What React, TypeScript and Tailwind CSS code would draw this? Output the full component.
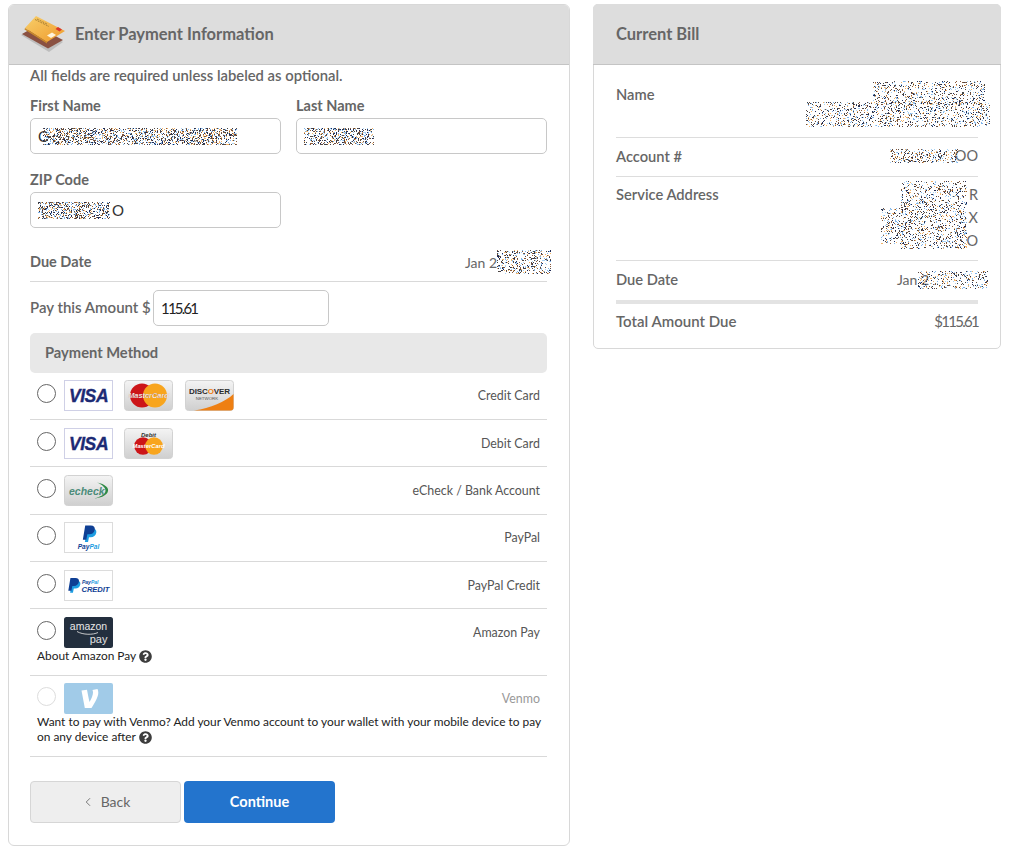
import React from "react";
import { FaQuestionCircle } from "react-icons/fa";
import { ChevronLeft } from "lucide-react";

const NOISE = ["#1f2a55", "#5a4a44", "#7fb4ea", "#f3b469", "#444444", "#a9d3f5", "#8a5a3a"];

function noisePaths(w: number, h: number, seed: number, density: number) {
  let s = seed >>> 0;
  const rnd = () => {
    s = (s * 1664525 + 1013904223) >>> 0;
    return s / 4294967296;
  };
  const paths: string[] = NOISE.map(() => "");
  for (let y = 0; y < h; y++) {
    for (let x = 0; x < w; x++) {
      const r = rnd();
      const c = rnd();
      if (r < density) paths[Math.floor(c * NOISE.length)] += `M${x} ${y}h1v1h-1z`;
    }
  }
  return paths;
}

function Noise({ w, h, seed, density = 0.3, className = "" }: { w: number; h: number; seed: number; density?: number; className?: string }) {
  const paths = React.useMemo(() => noisePaths(w, h, seed, density), [w, h, seed, density]);
  return (
    <svg width={w} height={h} viewBox={`0 0 ${w} ${h}`} shapeRendering="crispEdges" className={className}>
      {paths.map((d, i) => (
        <path key={i} d={d} fill={NOISE[i]} />
      ))}
    </svg>
  );
}

function Grads() {
  return (
    <svg width="0" height="0" className="absolute">
      <defs>
        <linearGradient id="gr" x1="0" y1="0" x2="0" y2="1">
          <stop offset="0" stopColor="#f4f4f4" />
          <stop offset="1" stopColor="#cfcfcf" />
        </linearGradient>
        <linearGradient id="card" x1="0" y1="0" x2="1" y2="1">
          <stop offset="0" stopColor="#f8cf6a" />
          <stop offset="1" stopColor="#ee9a2c" />
        </linearGradient>
      </defs>
    </svg>
  );
}

const Shell = ({ children }: { children: React.ReactNode }) => (
  <svg width="49" height="31" viewBox="0 0 49 31" className="shrink-0 block">
    {children}
  </svg>
);

const Visa = () => (
  <Shell>
    <rect x=".5" y=".5" width="48" height="30" fill="#fff" stroke="#cfd0e6" />
    <text x="24.5" y="21.5" textAnchor="middle" fontFamily="Liberation Sans" fontWeight="700" fontStyle="italic" fontSize="17.5" fill="#1c2a74" stroke="#1c2a74" strokeWidth=".35" letterSpacing="-.4">VISA</text>
  </Shell>
);

const GrayBox = () => <rect x=".5" y=".5" width="48" height="30" rx="3" fill="url(#gr)" stroke="#d2d2d2" />;

const Master = () => (
  <Shell>
    <GrayBox />
    <circle cx="18" cy="15.5" r="12" fill="#cc1518" />
    <circle cx="31" cy="15.5" r="12" fill="#f8a51d" />
    <text x="24.5" y="18" textAnchor="middle" fontFamily="Liberation Sans" fontWeight="700" fontStyle="italic" fontSize="7.4" fill="#fff" stroke="#8a3a20" strokeWidth=".15">MasterCard</text>
  </Shell>
);

const Discover = () => (
  <Shell>
    <GrayBox />
    <path d="M9 30.5C26 28 40 22 48.5 14V27.5a3 3 0 0 1-3 3z" fill="#ee7f12" />
    <text x="24.5" y="14" textAnchor="middle" fontFamily="Liberation Sans" fontWeight="700" fontSize="8" fill="#2b2b2b" textLength="41">DISC<tspan fill="#ee7f12">O</tspan>VER</text>
    <text x="22" y="19.5" textAnchor="middle" fontFamily="Liberation Sans" fontSize="4.4" fill="#555">NETWORK</text>
  </Shell>
);

const Debit = () => (
  <Shell>
    <GrayBox />
    <text x="24.5" y="8.5" textAnchor="middle" fontFamily="Liberation Sans" fontWeight="700" fontStyle="italic" fontSize="6" fill="#333">Debit</text>
    <circle cx="19" cy="18" r="8.8" fill="#cc1518" />
    <circle cx="30" cy="18" r="8.8" fill="#f8a51d" />
    <text x="24.5" y="20" textAnchor="middle" fontFamily="Liberation Sans" fontWeight="700" fontStyle="italic" fontSize="5.8" fill="#fff">MasterCard</text>
  </Shell>
);

const Echeck = () => (
  <Shell>
    <GrayBox />
    <path d="M33 7.5C41 9 46 13 43.5 17.5C41.5 21 36 23 30 23.5C36 22 41.5 19.5 41.5 15.5C41.5 12.5 38 9.5 33 7.5z" fill="#2f8a45" />
    <text x="5" y="19.5" fontFamily="Liberation Sans" fontWeight="700" fontStyle="italic" fontSize="10.5" fill="#4c8c7a">echeck</text>
  </Shell>
);

const PP = ({ x, y, s }: { x: number; y: number; s: number }) => (
  <g transform={`translate(${x} ${y}) scale(${s})`}>
    <path d="M5.5 3.5h6.2c3.5 0 5.1 2 4.5 5-.7 3.4-3.2 5.3-6.4 5.3H7.6l-1.1 5.7H2.8z" fill="#1d9de2" />
    <path d="M3.2 0h6.6c3.4 0 5.2 1.9 4.6 4.9-.7 3.5-3.1 5.5-6.5 5.5H5.7l-1.2 6.3H.4z" fill="#0f3f94" />
  </g>
);

const PayPal = () => (
  <Shell>
    <rect x=".5" y=".5" width="48" height="30" fill="#fff" stroke="#dcdcdc" />
    <PP x={18.5} y={3.5} s={0.85} />
    <text x="24.5" y="26.5" textAnchor="middle" fontFamily="Liberation Sans" fontWeight="700" fontStyle="italic" fontSize="6.6"><tspan fill="#0f3f94">Pay</tspan><tspan fill="#1d9de2">Pal</tspan></text>
  </Shell>
);

const PayPalCredit = () => (
  <Shell>
    <rect x=".5" y=".5" width="48" height="30" fill="#fff" stroke="#dcdcdc" />
    <PP x={4} y={8} s={0.76} />
    <text x="18" y="13.5" fontFamily="Liberation Sans" fontWeight="700" fontStyle="italic" fontSize="5"><tspan fill="#0f3f94">Pay</tspan><tspan fill="#1d9de2">Pal</tspan></text>
    <text x="17.5" y="21.5" fontFamily="Liberation Sans" fontWeight="700" fontStyle="italic" fontSize="7.6" fill="#0f3f94" textLength="28">CREDIT</text>
  </Shell>
);

const Amazon = () => (
  <Shell>
    <rect width="49" height="31" rx="2.5" fill="#232f3e" />
    <text x="24.5" y="13" textAnchor="middle" fontFamily="Liberation Sans" fontSize="10.5" fill="#e8e8e8">amazon</text>
    <path d="M13 14.5C19 18 29 18 34 15.5" fill="none" stroke="#d8d8d8" strokeWidth=".9" />
    <text x="43.5" y="25.5" textAnchor="end" fontFamily="Liberation Sans" fontSize="11" fill="#e2e2e2">pay</text>
  </Shell>
);

const Venmo = () => (
  <Shell>
    <rect width="49" height="31" rx="2" fill="#a1cbe8" />
    <path d="M17.5 7.5L23 6.8C24 12 24.8 16 25.5 19C27.5 15.5 29 12 29 9.5C29 8.5 28.8 7.8 28.5 7L33.5 6C34 7 34.3 8.2 34.3 9.7C34.3 14 30.5 20 27.5 25H20.8z" fill="#fff" />
  </Shell>
);

const CardIcon = () => (
  <svg width="46" height="38" viewBox="0 0 46 38" className="shrink-0">
    <path d="M0 20L15 12L42 27L28 37z" fill="#bdbdbd" />
    <path d="M1 19L15 11L42 25L27 33.5z" fill="#8a5142" />
    <path d="M15 1L44 16L26 27L4 13z" fill="url(#card)" />
    <path d="M4 13L26 27L26 28.5L3.5 14.5z" fill="#c98a2c" />
    <path d="M14 4.5L28 11.5M16 4L26 9" stroke="#8f6a28" strokeWidth="1" strokeDasharray="2 1" opacity=".7" />
    <path d="M37 12L41 14.5L38.5 16.5L34.5 14z" fill="#d9382a" />
    <path d="M26 20.5L31 17.5L35 20L30 23z" fill="#fff4dc" />
  </svg>
);

const HelpIcon = () => <FaQuestionCircle className="inline-block text-[#3d3d3d] text-[13px] ml-[3px] align-[-3px]" />;

function MethodRow({ logos, label, h, pt, extra, disabled }: { logos: React.ReactNode; label: string; h: string; pt: string; extra?: React.ReactNode; disabled?: boolean }) {
  return (
    <div className={`${h} ${pt} border-b border-[#d9d9d9] px-[7px]`}>
      <div className="flex items-start">
        <input
          type="radio"
          name="method"
          disabled={disabled}
          className={`appearance-none w-[19px] h-[19px] rounded-full border bg-white mt-[4px] shrink-0 ${disabled ? "border-[#dddddd]" : "border-[#666666]"}`}
        />
        <div className="flex gap-[11px] ml-[8px]">{logos}</div>
        <span className={`ml-auto text-[12.4px] leading-[31px] ${disabled ? "text-[#999999]" : "text-[#555555]"}`}>{label}</span>
      </div>
      {extra}
    </div>
  );
}

function RedactedInput({ w, children }: { w: string; children: React.ReactNode }) {
  return (
    <div className={`${w} h-[36px] border border-[#c8c8c8] rounded-[5px] bg-white flex items-center pl-[7px] text-[15px] text-[#333333]`}>
      {children}
    </div>
  );
}

export default function App() {
  return (
    <div className="relative w-[1009px] h-[854px] bg-white overflow-hidden text-[#666666] [font-family:Lato,'Liberation_Sans',sans-serif]">
      <Grads />
      <div className="flex items-start gap-[23px] pl-[8px] pt-[4px]">
        {/* left panel */}
        <section className="w-[562px] h-[842px] rounded-[6px] border border-[#d8d8d8] shrink-0 overflow-hidden">
          <header className="h-[61px] bg-[#dddddd] border-b border-[#c4c4c4] flex items-center pl-[13px] gap-[8px] -mx-px -mt-px">
            <CardIcon />
            <h2 className="text-[16.5px] font-bold text-[#666666]">Enter Payment Information</h2>
          </header>
          <div className="pl-[21px] pr-[22px]">
            <p className="text-[14.8px] font-semibold leading-[20px]">All fields are required unless labeled as optional.</p>
            <div className="flex gap-[15px] mt-[11px]">
              <div>
                <div className="text-[14.5px] font-bold leading-[20px] mb-[2px]">First Name</div>
                <RedactedInput w="w-[251px]">
                  <span>C</span>
                  <Noise w={194} h={17} seed={11} density={0.42} className="-ml-[5px]" />
                </RedactedInput>
              </div>
              <div>
                <div className="text-[14.5px] font-bold leading-[20px] mb-[2px]">Last Name</div>
                <RedactedInput w="w-[251px]">
                  <Noise w={70} h={17} seed={23} density={0.42} />
                </RedactedInput>
              </div>
            </div>
            <div className="mt-[16px] text-[14.5px] font-bold leading-[20px] mb-[2px]">ZIP Code</div>
            <RedactedInput w="w-[251px]">
              <Noise w={72} h={17} seed={37} density={0.42} />
              <span className="ml-[2px]">O</span>
            </RedactedInput>
            <div className="relative mt-[19px] h-[35px] pb-[4px] border-b border-[#d9d9d9] flex items-center justify-between">
              <span className="text-[14.5px] font-bold">Due Date</span>
              <span className="text-[14px] pr-[50px]">Jan 2</span>
              <Noise w={54} h={24} seed={41} density={0.3} className="absolute -right-[4px] top-[3px]" />
            </div>
            <div className="flex items-center mt-[8px]">
              <label className="text-[15px] font-semibold w-[123px] -translate-y-px">Pay this Amount $</label>
              <input readOnly value="115.61" className="w-[176px] h-[36px] border border-[#c8c8c8] rounded-[5px] pl-[7px] text-[15px] tracking-[-1.8px] text-[#222222] bg-white outline-none" />
            </div>
            <div className="mt-[7px] h-[40px] pb-[1px] bg-[#e8e8e8] rounded-[5px] flex items-center pl-[15px] text-[14.7px] font-bold text-[#666666]">Payment Method</div>
            <MethodRow h="h-[47px]" pt="pt-[7px]" label="Credit Card" logos={<><Visa /><Master /><span className="ml-px"><Discover /></span></>} />
            <MethodRow h="h-[47px]" pt="pt-[8px]" label="Debit Card" logos={<><Visa /><Debit /></>} />
            <MethodRow h="h-[48px]" pt="pt-[8px]" label="eCheck / Bank Account" logos={<Echeck />} />
            <MethodRow h="h-[47px]" pt="pt-[7px]" label="PayPal" logos={<PayPal />} />
            <MethodRow h="h-[47px]" pt="pt-[8px]" label="PayPal Credit" logos={<PayPalCredit />} />
            <MethodRow
              h="h-[67px]"
              pt="pt-[8px]"
              label="Amazon Pay"
              logos={<Amazon />}
              extra={<div className="text-[11.9px] text-[#222222] leading-[16px]">About Amazon Pay<HelpIcon /></div>}
            />
            <MethodRow
              disabled
              h="h-[81px]"
              pt="pt-[7px]"
              label="Venmo"
              logos={<Venmo />}
              extra={
                <div className="text-[11.9px] text-[#222222] leading-[15px] -mr-[7px]">
                  Want to pay with Venmo? Add your Venmo account to your wallet with your mobile device to pay on any device after<HelpIcon />
                </div>
              }
            />
            <div className="flex gap-[3px] mt-[24px]">
              <button className="w-[151px] h-[42px] pb-[1px] rounded-[4px] border border-[#d6d6d6] bg-[#eeeeee] text-[#666666] text-[14px] flex items-center justify-center gap-[6px]">
                <ChevronLeft size={14} strokeWidth={1.5} />
                <span>Back</span>
              </button>
              <button className="w-[151px] h-[42px] pb-[1px] rounded-[4px] bg-[#2374cd] text-white text-[14.5px] font-bold">Continue</button>
            </div>
          </div>
        </section>

        {/* right panel */}
        <section className="relative w-[408px] h-[345px] rounded-[5px] border border-[#d8d8d8] shrink-0">
          <header className="h-[61px] bg-[#dddddd] border-b border-[#c4c4c4] flex items-center pl-[23px] -mx-px -mt-px rounded-t-[5px]">
            <h2 className="text-[16.5px] font-bold text-[#666666]">Current Bill</h2>
          </header>
          <div className="pl-[22px] pr-[22px]">
            <div className="relative h-[73px] border-b border-[#dddddd] pt-[19px] text-[14.7px] font-semibold leading-[20px]">
              Name
              <Noise w={112} h={24} seed={51} density={0.24} className="absolute left-[257px] top-[16px]" />
              <Noise w={184} h={25} seed={53} density={0.24} className="absolute left-[190px] top-[37px]" />
            </div>
            <div className="relative h-[39px] pb-[2px] border-b border-[#dddddd] flex items-center justify-between">
              <span className="text-[14.7px] font-semibold">Account #</span>
              <span className="text-[14.5px]">OO</span>
              <Noise w={68} h={14} seed={61} density={0.3} className="absolute right-[20px] top-[11px]" />
            </div>
            <div className="relative h-[84px] border-b border-[#dddddd] flex justify-between pt-[7px]">
              <span className="text-[14.7px] font-semibold leading-[20px]">Service Address</span>
              <div className="text-right text-[14.5px] leading-[23px] -mt-px">
                <div>R</div>
                <div>X</div>
                <div>O</div>
              </div>
              <Noise w={66} h={68} seed={71} density={0.24} className="absolute left-[285px] top-[4px]" />
              <Noise w={22} h={36} seed={73} density={0.24} className="absolute left-[265px] top-[31px]" />
            </div>
            <div className="relative h-[43px] pb-[2px] border-b-[4px] border-[#e3e3e3] flex items-center justify-between">
              <span className="text-[14.7px] font-semibold">Due Date</span>
              <span className="text-[14px] pr-[49px]">Jan 2</span>
              <Noise w={70} h={18} seed={81} density={0.26} className="absolute left-[302px] top-[10px]" />
            </div>
            <div className="h-[38px] pb-[3px] flex items-center justify-between">
              <span className="text-[15px] font-semibold">Total Amount Due</span>
              <span className="text-[15px] tracking-[-1.7px]">$115.61</span>
            </div>
          </div>
        </section>
      </div>
    </div>
  );
}
